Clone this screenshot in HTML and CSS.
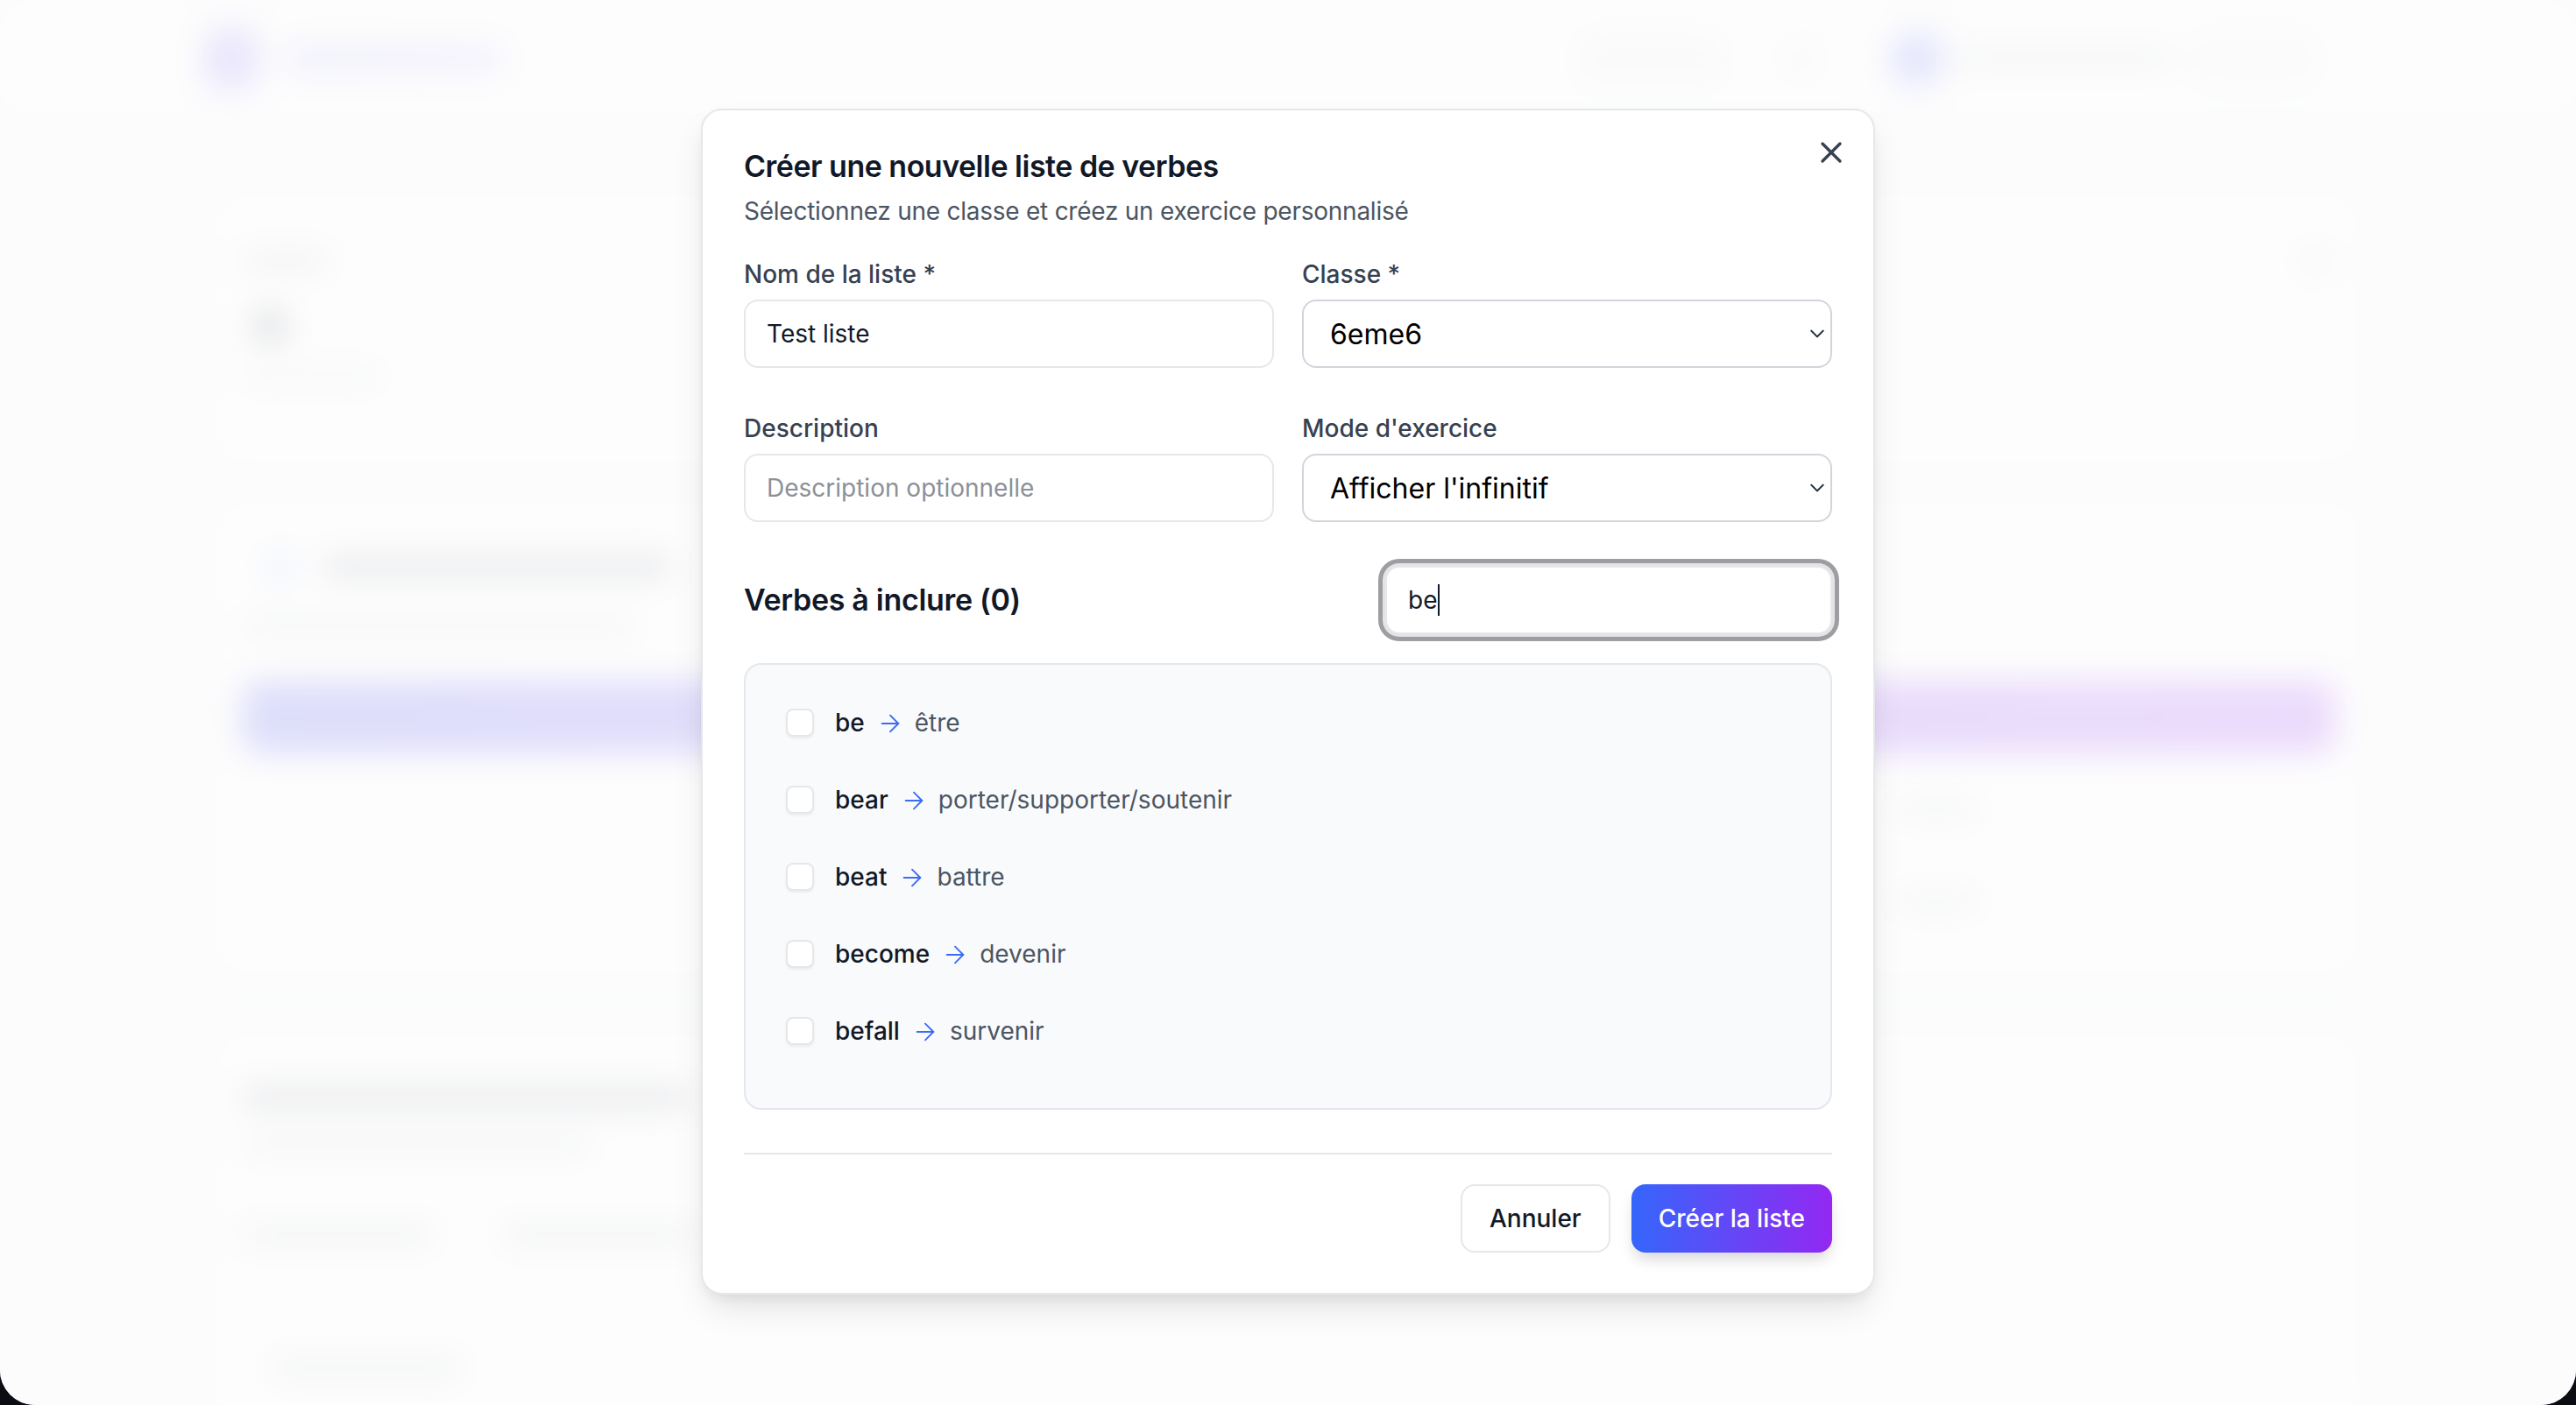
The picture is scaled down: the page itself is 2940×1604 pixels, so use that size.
FILE: index.html
```html
<!DOCTYPE html>
<html lang="fr">
  <head>
    <meta charset="UTF-8" />
    <meta name="viewport" content="width=device-width, initial-scale=1.0" />
    <title>Créer une nouvelle liste de verbes</title>
    <link rel="stylesheet" href="styles.css">
  </head>
  <body>
    <div class="screen">
      <!-- page behind the dialog, blurred -->
      <div class="app" aria-hidden="true">
        <header class="topbar">
          <div class="brand">
            <span class="brand-logo"></span>
            <span class="bar bar-brand"></span>
          </div>
          <nav class="nav">
            <span class="nav-pill"></span>
            <span class="nav-icon"></span>
            <span class="user">
              <span class="avatar"></span>
              <span class="bar bar-user"></span>
            </span>
            <span class="nav-btn"></span>
          </nav>
        </header>

        <main class="main">
          <section class="card card-stats">
            <div class="stats-head">
              <span class="bar bar-label"></span>
              <span class="dot-sq"></span>
            </div>
            <span class="stat-icon"></span>
            <span class="bar bar-small"></span>
          </section>

          <section class="card card-create">
            <div class="create-head">
              <span class="stat-icon soft"></span>
              <span class="bar bar-title"></span>
            </div>
            <span class="bar bar-sub"></span>
            <span class="grad-bar"></span>
            <div class="side-lines">
              <span class="bar bar-line"></span>
              <span class="bar bar-line"></span>
            </div>
          </section>

          <section class="card card-lists">
            <span class="bar bar-title wide"></span>
            <span class="bar bar-sub short"></span>
            <div class="tabs">
              <span class="tab"></span>
              <span class="tab"></span>
            </div>
            <span class="tab inset"></span>
          </section>
        </main>
      </div>

      <div class="overlay"></div>

      <div class="modal" role="dialog" aria-labelledby="modal-title">
        <button class="close" type="button" aria-label="Fermer">
          <svg viewBox="0 0 24 24" width="40" height="40" fill="none" stroke="currentColor" stroke-width="2" stroke-linecap="round" stroke-linejoin="round">
            <path d="M18 6 6 18" />
            <path d="m6 6 12 12" />
          </svg>
        </button>

        <h2 id="modal-title" class="modal-title">Créer une nouvelle liste de verbes</h2>
        <p class="modal-sub">Sélectionnez une classe et créez un exercice personnalisé</p>

        <div class="form-grid">
          <div class="field">
            <label class="label" for="name">Nom de la liste *</label>
            <input class="input" id="name" type="text" value="Test liste">
          </div>
          <div class="field">
            <label class="label" for="classe">Classe *</label>
            <div class="select-wrap">
              <select class="select" id="classe">
                <option>6eme6</option>
              </select>
              <svg class="chevron" viewBox="0 0 16 10" width="18" height="12" fill="none" stroke="currentColor" stroke-width="1.8" stroke-linecap="round" stroke-linejoin="round">
                <path d="M2 2l6 6 6-6" />
              </svg>
            </div>
          </div>
          <div class="field">
            <label class="label" for="desc">Description</label>
            <input class="input" id="desc" type="text" placeholder="Description optionnelle">
          </div>
          <div class="field">
            <label class="label" for="mode">Mode d'exercice</label>
            <div class="select-wrap">
              <select class="select" id="mode">
                <option>Afficher l'infinitif</option>
              </select>
              <svg class="chevron" viewBox="0 0 16 10" width="18" height="12" fill="none" stroke="currentColor" stroke-width="1.8" stroke-linecap="round" stroke-linejoin="round">
                <path d="M2 2l6 6 6-6" />
              </svg>
            </div>
          </div>
        </div>

        <div class="verbs-head">
          <h3 class="verbs-title">Verbes à inclure (0)</h3>
          <div class="search">be<span class="caret"></span></div>
        </div>

        <div class="verb-list">
          <label class="verb-row">
            <input class="check" type="checkbox">
            <span class="verb">be</span>
            <svg class="arrow" viewBox="0 0 24 24" width="32" height="32" fill="none" stroke="currentColor" stroke-width="1.4" stroke-linecap="round" stroke-linejoin="round"><path d="M5 12h14" /><path d="m12 5 7 7-7 7" /></svg>
            <span class="trans">être</span>
          </label>
          <label class="verb-row">
            <input class="check" type="checkbox">
            <span class="verb">bear</span>
            <svg class="arrow" viewBox="0 0 24 24" width="32" height="32" fill="none" stroke="currentColor" stroke-width="1.4" stroke-linecap="round" stroke-linejoin="round"><path d="M5 12h14" /><path d="m12 5 7 7-7 7" /></svg>
            <span class="trans">porter/supporter/soutenir</span>
          </label>
          <label class="verb-row">
            <input class="check" type="checkbox">
            <span class="verb">beat</span>
            <svg class="arrow" viewBox="0 0 24 24" width="32" height="32" fill="none" stroke="currentColor" stroke-width="1.4" stroke-linecap="round" stroke-linejoin="round"><path d="M5 12h14" /><path d="m12 5 7 7-7 7" /></svg>
            <span class="trans">battre</span>
          </label>
          <label class="verb-row">
            <input class="check" type="checkbox">
            <span class="verb">become</span>
            <svg class="arrow" viewBox="0 0 24 24" width="32" height="32" fill="none" stroke="currentColor" stroke-width="1.4" stroke-linecap="round" stroke-linejoin="round"><path d="M5 12h14" /><path d="m12 5 7 7-7 7" /></svg>
            <span class="trans">devenir</span>
          </label>
          <label class="verb-row">
            <input class="check" type="checkbox">
            <span class="verb">befall</span>
            <svg class="arrow" viewBox="0 0 24 24" width="32" height="32" fill="none" stroke="currentColor" stroke-width="1.4" stroke-linecap="round" stroke-linejoin="round"><path d="M5 12h14" /><path d="m12 5 7 7-7 7" /></svg>
            <span class="trans">survenir</span>
          </label>
        </div>

        <div class="modal-footer">
          <button class="btn btn-ghost" type="button">Annuler</button>
          <button class="btn btn-primary" type="button">Créer la liste</button>
        </div>
      </div>
    </div>
  </body>
</html>
```

FILE: styles.css
```css
* {
  box-sizing: border-box;
  font-family: Inter, "Noto Sans", Arial, sans-serif;
}

body {
  margin: 0;
  background: #0b0d12;
}

.screen {
  position: relative;
  width: 2940px;
  height: 1604px;
  overflow: hidden;
  background: #f7f8fa;
  border-radius: 0 0 40px 40px;
}

/* ---------- blurred page behind ---------- */

.app {
  height: 100%;
  background: #f7f8fa;
  filter: blur(18px);
}

.topbar {
  height: 136px;
  display: flex;
  align-items: center;
  justify-content: space-between;
  padding: 0 296px 0 232px;
  background: #ffffff;
  border-bottom: 2px solid #e5e7eb;
}

.brand {
  display: flex;
  align-items: center;
  gap: 30px;
}

.brand-logo {
  width: 64px;
  height: 72px;
  border-radius: 18px;
  background: linear-gradient(135deg, #6366f1, #8b5cf6);
  opacity: 0.7;
}

.bar {
  display: block;
  height: 24px;
  border-radius: 12px;
  background: #9ca3af;
}

.bar-brand {
  width: 250px;
  height: 34px;
  background: linear-gradient(90deg, #8b8ff5, #b49cf7);
  opacity: 0.6;
}

.nav {
  display: flex;
  align-items: center;
}

.nav-pill {
  width: 170px;
  height: 56px;
  border-radius: 14px;
  background: #e5e7eb;
  opacity: 0.7;
}

.nav-icon {
  width: 48px;
  height: 48px;
  margin-left: 64px;
  border-radius: 12px;
  background: #e5e7eb;
  opacity: 0.6;
}

.user {
  display: flex;
  align-items: center;
  gap: 12px;
  margin-left: 76px;
}

.avatar {
  width: 64px;
  height: 64px;
  border-radius: 50%;
  background: #818cf8;
}

.bar-user {
  width: 250px;
  height: 22px;
  background: #d1d5db;
}

.nav-btn {
  width: 142px;
  height: 54px;
  margin-left: 20px;
  border-radius: 14px;
  border: 3px solid #d1d5db;
  background: #f3f4f6;
}

.main {
  display: flex;
  flex-direction: column;
  gap: 28px;
  padding: 80px 240px 0 238px;
}

.card {
  display: flex;
  flex-direction: column;
  padding: 40px 36px;
  background: #ffffff;
  border: 2px solid #e5e7eb;
  border-radius: 24px;
  box-shadow: 0 4px 14px rgba(0, 0, 0, 0.05);
}

.card-stats {
  height: 323px;
  padding-top: 60px;
}

.stats-head {
  display: flex;
  align-items: center;
  justify-content: space-between;
}

.bar-label {
  width: 100px;
  height: 18px;
  background: #b4b9c2;
}

.dot-sq {
  width: 40px;
  height: 40px;
  border-radius: 10px;
  background: #e5e7eb;
}

.stat-icon {
  width: 40px;
  height: 40px;
  margin: 34px 0 0 12px;
  border-radius: 50%;
  background: #6b7280;
}

.stat-icon.soft {
  margin: 0;
  background: #c7d2fe;
}

.bar-small {
  width: 160px;
  height: 16px;
  margin-top: 30px;
  background: #d1d5db;
}

.card-create {
  height: 553px;
  padding: 58px 32px 0 36px;
}

.create-head {
  display: flex;
  align-items: center;
  gap: 28px;
  margin-left: 24px;
}

.bar-title {
  width: 400px;
  height: 26px;
  background: #9aa0aa;
}

.bar-sub {
  width: 450px;
  height: 16px;
  margin-top: 40px;
  background: #c4c8d0;
}

.grad-bar {
  display: block;
  height: 84px;
  margin-top: 54px;
  border-radius: 20px;
  background: linear-gradient(90deg, #6366f1, #a855f7);
}

.side-lines {
  display: flex;
  flex-direction: column;
  gap: 88px;
  margin: 56px 0 0 1884px;
}

.bar-line {
  width: 100px;
  height: 16px;
  background: #c4c8d0;
}

.card-lists {
  flex: 1;
  margin-top: 28px;
  padding: 62px 36px;
}

.bar-title.wide {
  width: 510px;
}

.bar-sub.short {
  width: 400px;
  margin-top: 34px;
}

.tabs {
  display: flex;
  gap: 76px;
  margin-top: 80px;
}

.tab {
  display: block;
  width: 220px;
  height: 28px;
  border-radius: 10px;
  background: #d1d5db;
}

.tab.inset {
  margin: 124px 0 0 32px;
}

.overlay {
  position: absolute;
  inset: 0;
  background: rgba(252, 252, 253, 0.8);
}

/* ---------- dialog ---------- */

.modal {
  position: absolute;
  left: 800px;
  top: 124px;
  width: 1340px;
  padding: 36px 47px 46px;
  background: #ffffff;
  border: 2px solid #e5e7eb;
  border-radius: 24px;
  box-shadow: 0 20px 40px -8px rgba(0, 0, 0, 0.12), 0 8px 16px -6px rgba(0, 0, 0, 0.08);
}

.close {
  position: absolute;
  top: 28px;
  right: 28px;
  display: flex;
  padding: 0;
  border: 0;
  background: none;
  color: #374151;
}

.modal-title {
  margin: 0;
  font-size: 34px;
  line-height: 56px;
  font-weight: 600;
  color: #111827;
  letter-spacing: -0.5px;
}

.modal-sub {
  margin: 3px 0 0;
  font-size: 28px;
  line-height: 40px;
  color: #4b5563;
  letter-spacing: -0.25px;
}

.form-grid {
  display: grid;
  grid-template-columns: 1fr 1fr;
  column-gap: 32px;
  row-gap: 49px;
  margin-top: 32px;
}

.field {
  display: flex;
  flex-direction: column;
}

.label {
  margin-bottom: 9px;
  font-size: 28px;
  line-height: 40px;
  font-weight: 500;
  color: #374151;
}

.input {
  height: 78px;
  padding: 0 24px;
  font-size: 28px;
  color: #111827;
  background: #ffffff;
  border: 2px solid #e5e7eb;
  border-radius: 16px;
  outline: none;
}

.input::placeholder {
  color: #8b9099;
}

.select-wrap {
  position: relative;
}

.select {
  width: 100%;
  height: 78px;
  padding: 0 30px;
  font-size: 32px;
  color: #000000;
  background: #ffffff;
  border: 2px solid #d1d5db;
  border-radius: 16px;
  appearance: none;
  -webkit-appearance: none;
  outline: none;
}

.chevron {
  position: absolute;
  top: 33px;
  right: 8px;
  color: #1f2937;
  pointer-events: none;
}

.verbs-head {
  display: flex;
  align-items: center;
  justify-content: space-between;
  margin-top: 50px;
}

.verbs-title {
  margin: 0;
  font-size: 34px;
  line-height: 48px;
  font-weight: 600;
  color: #111827;
  letter-spacing: -0.3px;
}

.search {
  display: flex;
  align-items: center;
  width: 510px;
  height: 78px;
  padding: 0 24px;
  font-size: 28px;
  color: #111827;
  background: #ffffff;
  border: 2px solid #e5e7eb;
  border-radius: 16px;
  box-shadow: 0 0 0 3px #e4e4e7, 0 0 0 8px #9d9da2;
}

.caret {
  width: 2px;
  height: 36px;
  margin-left: 1px;
  background: #111827;
}

.verb-list {
  height: 510px;
  margin-top: 33px;
  padding: 22px 24px;
  overflow: hidden;
  background: #f9fafb;
  border: 2px solid #e5e7eb;
  border-radius: 20px;
}

.verb-row {
  display: flex;
  align-items: center;
  height: 88px;
  padding: 0 22px;
  font-size: 28px;
}

.check {
  width: 32px;
  height: 32px;
  margin: 0 24px 0 0;
  appearance: none;
  -webkit-appearance: none;
  background: #ffffff;
  border: 2px solid #e5e7eb;
  border-radius: 8px;
  box-shadow: 0 2px 3px rgba(0, 0, 0, 0.06);
}

.verb {
  font-weight: 500;
  color: #111827;
}

.arrow {
  margin: 2px 12px 0 13px;
  color: #3b6cf6;
}

.trans {
  color: #4b5563;
}

.modal-footer {
  display: flex;
  justify-content: flex-end;
  gap: 24px;
  margin-top: 49px;
  padding-top: 34px;
  border-top: 2px solid #e5e7eb;
}

.btn {
  height: 78px;
  padding: 0 31px;
  font-size: 28px;
  font-weight: 500;
  border-radius: 16px;
  cursor: pointer;
}

.btn-ghost {
  color: #111827;
  background: #ffffff;
  border: 2px solid #e5e7eb;
}

.btn-primary {
  color: #ffffff;
  background: linear-gradient(90deg, #3566fb, #9328f2);
  border: 0;
  box-shadow: 0 10px 18px -4px rgba(0, 0, 0, 0.18);
}
```
